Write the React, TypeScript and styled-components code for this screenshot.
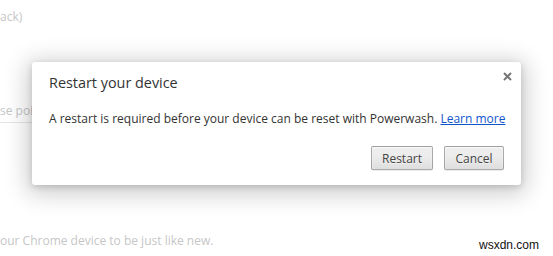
import React from "react";
import styled, { createGlobalStyle } from "styled-components";

const Global = createGlobalStyle`
  html, body { margin: 0; padding: 0; background: #fff; }
  body { font-family: "Open Sans", "Noto Sans", sans-serif; }
`;

const Page = styled.div`
  position: relative;
  width: 553px;
  height: 256px;
  overflow: hidden;
  background: #fff;
`;

const Backdrop = styled.div`
  display: flex;
  flex-direction: column;
  padding-top: 8px;
  color: #c6c6c6;
  font-size: 12px;
  line-height: 18px;
`;

const FaintLine = styled.div<{ $top: number }>`
  margin-top: ${(p) => p.$top}px;
  white-space: nowrap;
`;

const FaintInput = styled.div`
  margin-top: 76px;
  width: 120px;
  height: 20px;
  border-bottom: 1px solid #e6e6e6;
  white-space: nowrap;
`;

const Overlay = styled.div`
  position: absolute;
  inset: 0;
  display: flex;
  justify-content: center;
  align-items: flex-start;
  padding-top: 62px;
`;

const Dialog = styled.div`
  position: relative;
  width: 489px;
  height: 123px;
  box-sizing: border-box;
  background: #fff;
  border-radius: 3px;
  box-shadow: 0 4px 23px 5px rgba(0, 0, 0, 0.2), 0 2px 6px rgba(0, 0, 0, 0.15);
  padding: 10px 17px 0 17px;
  display: flex;
  flex-direction: column;
  color: #333;
`;

const Title = styled.h1`
  margin: 0;
  font-size: 14.4px;
  font-weight: 400;
  line-height: 22px;
  color: #333;
`;

const Body = styled.p`
  margin: 16px 0 0;
  font-size: 12px;
  line-height: 18px;
  white-space: nowrap;
`;

const Link = styled.a`
  color: #15c;
  text-decoration: underline;
  cursor: pointer;
`;

const Close = styled.button`
  position: absolute;
  top: 7px;
  right: 7px;
  width: 14px;
  height: 14px;
  padding: 0;
  border: 0;
  background: transparent;
  display: flex;
  align-items: center;
  justify-content: center;
`;

const Actions = styled.div`
  display: flex;
  justify-content: flex-end;
  gap: 11px;
  margin-top: 18px;
`;

const Button = styled.button`
  box-sizing: border-box;
  height: 24px;
  padding: 0 10px;
  min-width: 60px;
  font-family: "Open Sans", "Noto Sans", sans-serif;
  font-size: 12px;
  color: #444;
  border: 1px solid rgba(0, 0, 0, 0.28);
  border-radius: 2px;
  background-image: linear-gradient(#ededed, #ededed 38%, #dedede);
  box-shadow: 0 1px 0 rgba(0, 0, 0, 0.08), inset 0 1px 2px rgba(255, 255, 255, 0.75);
  text-shadow: 0 1px 0 #f0f0f0;
`;

const Watermark = styled.div`
  position: absolute;
  right: 14px;
  bottom: 4px;
  font-family: "Liberation Sans", Arial, sans-serif;
  font-size: 12px;
  color: #111;
`;

export default function App() {
  return (
    <>
      <Global />
      <Page>
        <Backdrop>
          <FaintLine $top={0}>ack)</FaintLine>
          <FaintInput>se point</FaintInput>
          <FaintLine $top={109}>our Chrome device to be just like new.</FaintLine>
        </Backdrop>
        <Overlay>
          <Dialog>
            <Title>Restart your device</Title>
            <Close aria-label="Close">
              <svg width="9" height="9" viewBox="0 0 9 9">
                <path d="M1 1L8 8M8 1L1 8" stroke="#777" strokeWidth="2" />
              </svg>
            </Close>
            <Body>
              A restart is required before your device can be reset with Powerwash.{" "}
              <Link>Learn more</Link>
            </Body>
            <Actions>
              <Button>Restart</Button>
              <Button>Cancel</Button>
            </Actions>
          </Dialog>
        </Overlay>
        <Watermark>wsxdn.com</Watermark>
      </Page>
    </>
  );
}
